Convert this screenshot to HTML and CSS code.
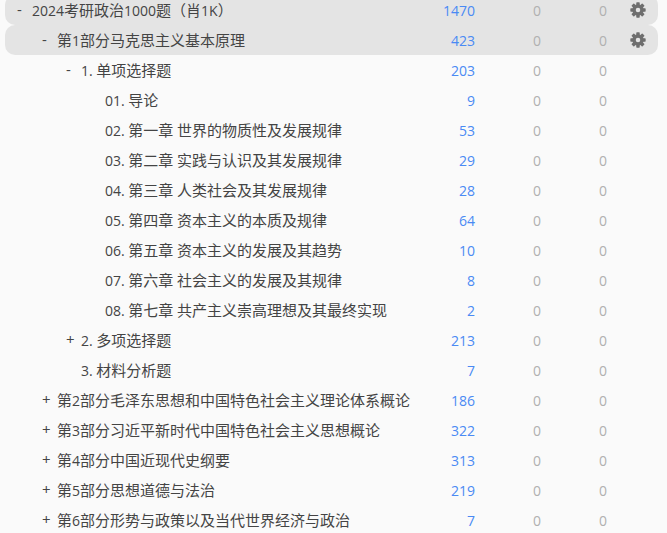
FILE: index.html
```html
<!DOCTYPE html>
<html lang="en">

<head>
    <meta charset="UTF-8">
    <meta name="viewport" content="width=device-width, initial-scale=1.0">
    <title>Deck list</title>
    <link rel="stylesheet" href="styles.css">
</head>

<body>
    <svg class="defs" aria-hidden="true">
        <symbol id="cog" viewBox="0 0 24 24">
            <rect x="9.4" y="0.500" width="5.200" height="23" rx="1"/>
            <rect x="9.4" y="0.500" width="5.200" height="23" rx="1" transform="rotate(45 12 12)"/>
            <rect x="9.4" y="0.500" width="5.200" height="23" rx="1" transform="rotate(90 12 12)"/>
            <rect x="9.4" y="0.500" width="5.200" height="23" rx="1" transform="rotate(135 12 12)"/>
            <circle cx="12" cy="12" r="8.500"/>
            <circle class="cog-hole" cx="12" cy="12" r="3.400"/>
        </symbol>
    </svg>

    <div class="deck-list">
        <div class="row active level-0">
            <span class="toggle">-</span><span class="name"><span class="lat">2024</span>考研政治<span class="lat">1000</span>题（肖<span class="lat">1K</span>）</span>
            <span class="num total">1470</span><span class="num zero">0</span><span class="num zero">0</span>
            <span class="gear"><svg><use href="#cog"/></svg></span>
        </div>
        <div class="row active level-1">
            <span class="toggle">-</span><span class="name">第<span class="lat">1</span>部分马克思主义基本原理</span>
            <span class="num total">423</span><span class="num zero">0</span><span class="num zero">0</span>
            <span class="gear"><svg><use href="#cog"/></svg></span>
        </div>
        <div class="row level-2">
            <span class="toggle">-</span><span class="name"><span class="lat">1. </span>单项选择题</span>
            <span class="num total">203</span><span class="num zero">0</span><span class="num zero">0</span><span class="gear"></span>
        </div>
        <div class="row level-3">
            <span class="name"><span class="lat">01. </span>导论</span>
            <span class="num total">9</span><span class="num zero">0</span><span class="num zero">0</span><span class="gear"></span>
        </div>
        <div class="row level-3">
            <span class="name"><span class="lat">02. </span>第一章<span class="lat"> </span>世界的物质性及发展规律</span>
            <span class="num total">53</span><span class="num zero">0</span><span class="num zero">0</span><span class="gear"></span>
        </div>
        <div class="row level-3">
            <span class="name"><span class="lat">03. </span>第二章<span class="lat"> </span>实践与认识及其发展规律</span>
            <span class="num total">29</span><span class="num zero">0</span><span class="num zero">0</span><span class="gear"></span>
        </div>
        <div class="row level-3">
            <span class="name"><span class="lat">04. </span>第三章<span class="lat"> </span>人类社会及其发展规律</span>
            <span class="num total">28</span><span class="num zero">0</span><span class="num zero">0</span><span class="gear"></span>
        </div>
        <div class="row level-3">
            <span class="name"><span class="lat">05. </span>第四章<span class="lat"> </span>资本主义的本质及规律</span>
            <span class="num total">64</span><span class="num zero">0</span><span class="num zero">0</span><span class="gear"></span>
        </div>
        <div class="row level-3">
            <span class="name"><span class="lat">06. </span>第五章<span class="lat"> </span>资本主义的发展及其趋势</span>
            <span class="num total">10</span><span class="num zero">0</span><span class="num zero">0</span><span class="gear"></span>
        </div>
        <div class="row level-3">
            <span class="name"><span class="lat">07. </span>第六章<span class="lat"> </span>社会主义的发展及其规律</span>
            <span class="num total">8</span><span class="num zero">0</span><span class="num zero">0</span><span class="gear"></span>
        </div>
        <div class="row level-3">
            <span class="name"><span class="lat">08. </span>第七章<span class="lat"> </span>共产主义崇高理想及其最终实现</span>
            <span class="num total">2</span><span class="num zero">0</span><span class="num zero">0</span><span class="gear"></span>
        </div>
        <div class="row level-2">
            <span class="toggle">+</span><span class="name"><span class="lat">2. </span>多项选择题</span>
            <span class="num total">213</span><span class="num zero">0</span><span class="num zero">0</span><span class="gear"></span>
        </div>
        <div class="row level-2">
            <span class="toggle"></span><span class="name"><span class="lat">3. </span>材料分析题</span>
            <span class="num total">7</span><span class="num zero">0</span><span class="num zero">0</span><span class="gear"></span>
        </div>
        <div class="row level-1">
            <span class="toggle">+</span><span class="name">第<span class="lat">2</span>部分毛泽东思想和中国特色社会主义理论体系概论</span>
            <span class="num total">186</span><span class="num zero">0</span><span class="num zero">0</span><span class="gear"></span>
        </div>
        <div class="row level-1">
            <span class="toggle">+</span><span class="name">第<span class="lat">3</span>部分习近平新时代中国特色社会主义思想概论</span>
            <span class="num total">322</span><span class="num zero">0</span><span class="num zero">0</span><span class="gear"></span>
        </div>
        <div class="row level-1">
            <span class="toggle">+</span><span class="name">第<span class="lat">4</span>部分中国近现代史纲要</span>
            <span class="num total">313</span><span class="num zero">0</span><span class="num zero">0</span><span class="gear"></span>
        </div>
        <div class="row level-1">
            <span class="toggle">+</span><span class="name">第<span class="lat">5</span>部分思想道德与法治</span>
            <span class="num total">219</span><span class="num zero">0</span><span class="num zero">0</span><span class="gear"></span>
        </div>
        <div class="row level-1">
            <span class="toggle">+</span><span class="name">第<span class="lat">6</span>部分形势与政策以及当代世界经济与政治</span>
            <span class="num total">7</span><span class="num zero">0</span><span class="num zero">0</span><span class="gear"></span>
        </div>
    </div>
</body>

</html>
```

FILE: styles.css
```css
html,
body {
    height: 100%;
    overflow: hidden;
}

body {
    margin: 0;
    background-color: #fafafa;
    color: #444;
    font-family: "Open Sans", "Noto Sans CJK SC", sans-serif;
    font-size: 14px;
}

.defs {
    display: none;
}

/* list is scrolled a few pixels, first row is cut by the window */
.deck-list {
    margin-top: -5px;
    padding: 0 9px 0 5px;
}

.row {
    display: flex;
    align-items: center;
    height: 30px;
    border-radius: 10px;
}

.row.active {
    background-color: #e4e4e4;
}

.level-0 {
    padding-left: 8px;
}

.level-1 {
    padding-left: 33px;
}

.level-2 {
    padding-left: 57px;
}

.level-3 {
    padding-left: 100px;
}

.toggle {
    width: 19px;
    flex: none;
    padding-left: 4px;
    box-sizing: border-box;
    font-size: 15px;
    margin-bottom: 2px;
}

.name {
    flex: 1;
    white-space: pre;
    font-size: 15px;
    margin-bottom: 2px;
}

/* digits and latin letters are set a size smaller than the chinese text */
.lat {
    font-size: 14px;
}

.num {
    flex: none;
    text-align: right;
}

.total {
    width: 60px;
    color: #4a8af4;
}

.zero {
    width: 66px;
    color: #b0b0b0;
}

.gear {
    width: 51px;
    flex: none;
    display: flex;
    justify-content: flex-end;
    padding-right: 12px;
    box-sizing: border-box;
}

.gear svg {
    width: 16px;
    height: 16px;
    fill: #6e6e6e;
}

.cog-hole {
    fill: #e4e4e4;
}
```
